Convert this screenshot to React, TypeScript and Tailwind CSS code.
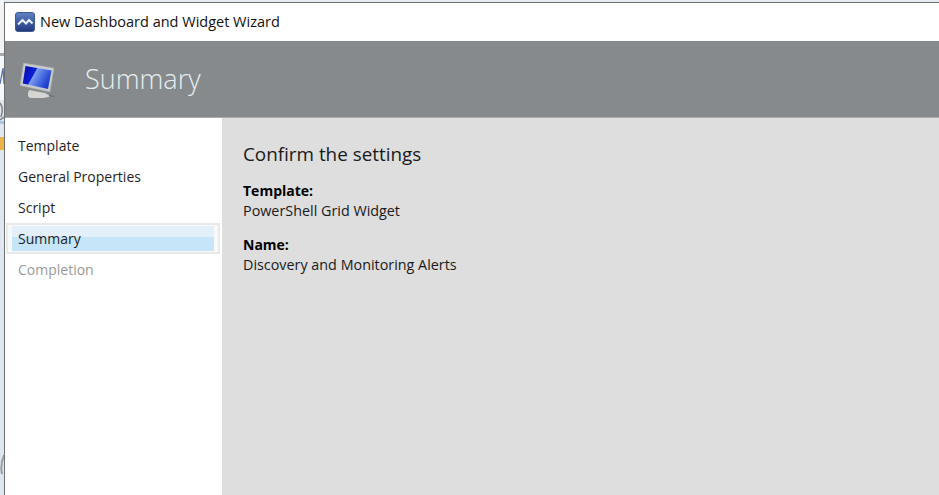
const font = { fontFamily: '"Open Sans", "Noto Sans", sans-serif' };

function TitleIcon() {
  return (
    <svg width="20" height="20" viewBox="0 0 20 20" className="shrink-0">
      <defs>
        <linearGradient id="ti" x1="0" y1="0" x2="0" y2="1">
          <stop offset="0" stopColor="#5f83c4" />
          <stop offset="1" stopColor="#233680" />
        </linearGradient>
      </defs>
      <rect x="0.5" y="0.5" width="19" height="19" rx="2.5" fill="url(#ti)" stroke="#3c5a8c" />
      <path d="M3 12.5 L7.5 8 L11 11.5 L14 8 L17.5 11.5" fill="none" stroke="#e8eef8" strokeWidth="2" />
    </svg>
  );
}

function MonitorIcon() {
  return (
    <svg width="36" height="36" viewBox="0 0 36 36" className="shrink-0 mt-[1px]">
      <defs>
        <linearGradient id="sc" x1="0" y1="0" x2="1" y2="0.45">
          <stop offset="0" stopColor="#0708a8" />
          <stop offset="0.44" stopColor="#0a20d8" />
          <stop offset="0.47" stopColor="#7c9cec" />
          <stop offset="0.7" stopColor="#4f72e2" />
          <stop offset="1" stopColor="#1f3ed0" />
        </linearGradient>
      </defs>
      <path d="M9 28 L25 31 L30 34 Q27 36 20 36 L11 36 Q6 35 9 28 Z" fill="#d5d6d4" />
      <path d="M3.5 1 L34 6 L30 30 L0 23.5 Z" fill="#c8cbce" stroke="#a4a7aa" strokeWidth="0.6" />
      <path d="M5.5 4 L31.5 8.5 L28 27 L2.8 21.5 Z" fill="url(#sc)" />
      <path d="M29 33.5 L34 34.5" stroke="#65676a" strokeWidth="1" />
    </svg>
  );
}

function DesktopSliver() {
  return (
    <svg width="4" height="495" viewBox="0 0 4 495" className="shrink-0 block">
      <rect width="4" height="495" fill="#dfe6f0" />
      <rect y="0" width="4" height="53" fill="#f2f3f5" />
      <rect y="53" width="4" height="3" fill="#a9a9a9" />
      <rect y="56" width="4" height="44" fill="#f6f7f8" />
      <path d="M0 84 L3 68 L4 84" fill="none" stroke="#5a6fb0" strokeWidth="1.3" />
      <path d="M0 103 Q4 108 1 117 M0 120 L4 117" fill="none" stroke="#7d7f82" strokeWidth="1.5" />
      <rect y="121" width="4" height="3" fill="#a9c5e6" />
      <rect y="137" width="4" height="13" fill="#eeb14a" />
      <path d="M4 455 Q0 465 2 474" fill="none" stroke="#9a9c9e" strokeWidth="2" />
    </svg>
  );
}

function NavItem({ label, tone = "text-[#1f1f1f]" }: { label: string; tone?: string }) {
  return (
    <div className={`h-[31px] pl-[13px] flex items-center text-[14px] ${tone}`}>{label}</div>
  );
}

export default function App() {
  return (
    <div className="w-[939px] h-[495px] overflow-hidden flex bg-[#e6ebf2]" style={font}>
      <DesktopSliver />
      <div className="flex-1 flex flex-col border-l border-t border-[#6d7073] mt-[2px] bg-white">
        <div className="h-[38px] shrink-0 flex items-center gap-[5px] pl-[10px] pb-[1px] text-[14.5px] text-[#111]">
          <TitleIcon />
          <span>New Dashboard and Widget Wizard</span>
        </div>
        <div className="h-[77px] shrink-0 bg-[#878a8c] flex items-center gap-[29px] pl-[15px] border-b border-[#a9abad]">
          <MonitorIcon />
          <span className="text-[27px] font-light text-[#e6eef2]">Summary</span>
        </div>
        <div className="flex-1 flex min-h-0">
          <div className="w-[216px] shrink-0 bg-white pt-[12px]">
            <NavItem label="Template" />
            <NavItem label="General Properties" />
            <NavItem label="Script" />
            <div className="h-[31px] ml-[1px] w-[214px] border-2 border-[#e9e9e9] bg-[#f8f8f8] flex items-stretch px-[4px] py-[1px]">
              <div className="flex-1 flex items-center pl-[6px] text-[14px] text-[#1f1f1f] bg-[linear-gradient(#e3f0fc_0,#e3f0fc_42%,#c6e5f8_42%,#c6e5f8_100%)]">
                Summary
              </div>
            </div>
            <NavItem label="Completion" tone="text-[#9a9a9a]" />
          </div>
          <div className="flex-1 bg-[#dedede] pl-[21px] pt-[23px] ml-[1px] text-[#1a1a1a]">
            <div className="text-[18.85px] leading-[26px]">Confirm the settings</div>
            <div className="mt-[14px] text-[14.35px] leading-[20px]">
              <div className="font-bold text-[14px] text-black">Template:</div>
              <div>PowerShell Grid Widget</div>
            </div>
            <div className="mt-[14px] text-[14.35px] leading-[20px]">
              <div className="font-bold text-[14px] text-black">Name:</div>
              <div>Discovery and Monitoring Alerts</div>
            </div>
          </div>
        </div>
      </div>
    </div>
  );
}
